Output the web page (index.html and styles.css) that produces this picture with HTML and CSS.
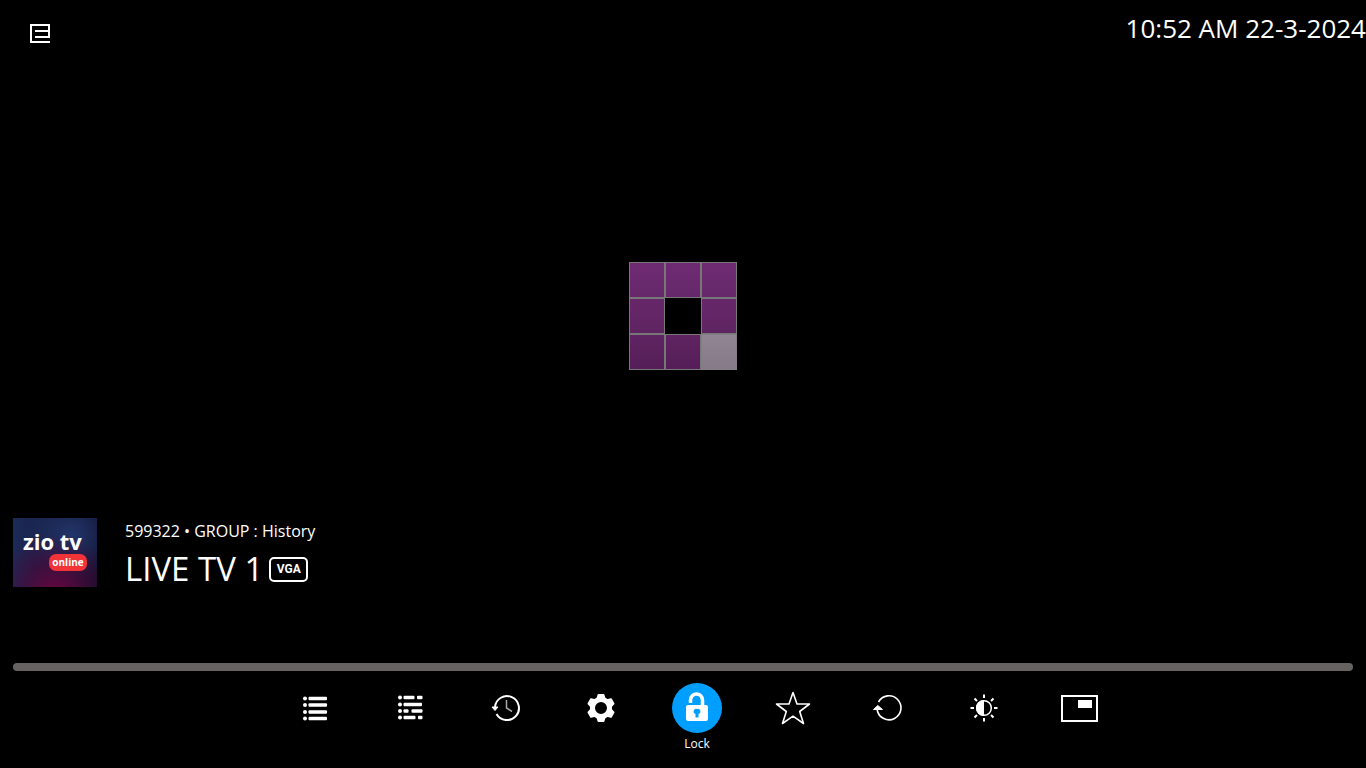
FILE: index.html
```
<!DOCTYPE html>
<html lang="en">
<head>
    <meta charset="UTF-8">
    <meta name="viewport" content="width=device-width, initial-scale=1.0">
    <title>Live TV Player</title>
    <link rel="stylesheet" href="styles.css">
</head>
<body>
    <!-- Top bar -->
    <header>
        <button class="menu-btn" aria-label="Menu">
            <svg width="21" height="20" viewBox="0 0 21 20" fill="none" stroke="#fff" stroke-width="2">
                <path d="M21 19H2V2H20V14H6M20 8H6"/>
            </svg>
        </button>
        <time class="clock" datetime="2024-03-22T10:52">10:52 AM 22-3-2024</time>
    </header>

    <!-- Loading indicator -->
    <main>
        <div class="loader" role="status" aria-label="Loading">
            <span class="cell"></span>
            <span class="cell"></span>
            <span class="cell"></span>
            <span class="cell mid"></span>
            <span class="cell empty"></span>
            <span class="cell mid"></span>
            <span class="cell low"></span>
            <span class="cell low"></span>
            <span class="cell active"></span>
        </div>
    </main>

    <!-- Channel info -->
    <section class="channel">
        <div class="logo">
            <span class="logo-name">zio tv</span>
            <span class="logo-tag">online</span>
        </div>
        <div class="info">
            <p class="group">599322 • GROUP : History</p>
            <h1>LIVE TV 1 <span class="quality">VGA</span></h1>
        </div>
    </section>

    <input class="seek" type="range" min="0" max="100" value="0" aria-label="Seek">

    <!-- Player controls -->
    <nav class="controls">
        <button class="control" aria-label="Channels">
            <svg class="icon" viewBox="0 0 50 50" fill="#fff">
                <circle cx="15" cy="15.500" r="2"/><circle cx="15" cy="22" r="2"/><circle cx="15" cy="29" r="2"/><circle cx="15" cy="35.500" r="2"/>
                <rect x="18.500" y="13.800" width="18.500" height="3.400" rx="1"/><rect x="18.500" y="20.300" width="18.500" height="3.400" rx="1"/>
                <rect x="18.500" y="27.300" width="18.500" height="3.400" rx="1"/><rect x="18.500" y="33.800" width="18.500" height="3.400" rx="1"/>
            </svg>
        </button>
        <button class="control" aria-label="Guide">
            <svg class="icon" viewBox="0 0 50 50" fill="#fff">
                <circle cx="15" cy="14.500" r="2"/><circle cx="15" cy="21.500" r="2"/><circle cx="15" cy="28" r="2"/><circle cx="15" cy="34.500" r="2"/>
                <rect x="18.500" y="12.800" width="11" height="3.400" rx="1"/><rect x="32" y="12.800" width="5.500" height="3.400" rx="1"/>
                <rect x="18.500" y="19.800" width="18.500" height="3.400" rx="1"/>
                <rect x="18.500" y="26.300" width="5" height="3.400" rx="1"/><rect x="26.500" y="26.300" width="11" height="3.400" rx="1"/>
                <rect x="18.500" y="32.800" width="12" height="3.400" rx="1"/><rect x="33" y="32.800" width="4.500" height="3.400" rx="1"/>
            </svg>
        </button>
        <button class="control" aria-label="History">
            <svg class="icon" viewBox="0 0 50 50" fill="none" stroke="#fff" stroke-width="2">
                <path d="M14 24A12 12 0 1 1 15.500 31"/>
                <path d="M11 24H17L14 27.500Z" fill="#fff" stroke-width="1"/>
                <path d="M25.500 17V25L31 28.500" stroke="#aaa" stroke-width="1.500"/>
            </svg>
        </button>
        <button class="control" aria-label="Settings">
            <svg class="icon" viewBox="0 0 50 50" fill="none" stroke="#fff">
                <circle cx="25" cy="25" r="8.500" stroke-width="5"/>
                <g fill="#fff" stroke-width="2" stroke-linejoin="round">
                    <path id="tooth" d="M22.500 12H27.500L29 17H21Z"/>
                    <use href="#tooth" transform="rotate(60 25 25)"/>
                    <use href="#tooth" transform="rotate(120 25 25)"/>
                    <use href="#tooth" transform="rotate(180 25 25)"/>
                    <use href="#tooth" transform="rotate(240 25 25)"/>
                    <use href="#tooth" transform="rotate(300 25 25)"/>
                </g>
            </svg>
        </button>
        <button class="control selected">
            <svg class="icon" viewBox="0 0 50 50" fill="none">
                <path d="M18.500 20V17A6 6 0 0 1 30.500 17V23" stroke="#fff" stroke-width="3.500"/>
                <rect x="14" y="22" width="22" height="16" rx="2" fill="#fff"/>
                <path d="M25 26A2.600 2.600 0 0 1 26.500 31V34.500H23.500V31A2.600 2.600 0 0 1 25 26Z" fill="#009fff"/>
            </svg>
            Lock
        </button>
        <button class="control" aria-label="Favorite">
            <svg class="icon" viewBox="0 0 50 50" fill="none" stroke="#fff" stroke-width="1.600" stroke-linejoin="round">
                <path d="M25 9.500L29 21H41.500L31.700 28.500L35.500 40.500L25 33.200L14.500 40.500L18.300 28.500L8.500 21H21Z"/>
            </svg>
        </button>
        <button class="control" aria-label="Reload">
            <svg class="icon" viewBox="0 0 50 50" fill="none" stroke="#fff" stroke-width="1.600">
                <path d="M15.500 19A12 12 0 1 1 14.200 27"/>
                <path d="M10.500 26.500L14.800 22.500L19.500 26.500Z" fill="#fff" stroke-width="1"/>
            </svg>
        </button>
        <button class="control" aria-label="Brightness">
            <svg class="icon" viewBox="0 0 50 50" fill="none" stroke="#fff" stroke-width="2">
                <circle cx="25" cy="25" r="7.300" stroke-width="1.500"/>
                <path d="M25 17A8 8 0 0 0 25 33Z" fill="#fff" stroke="none"/>
                <path d="M25 11.500V15M25 35V38.500M11.500 25H15M35 25H38.500M15.500 15.500L18 18M32 32L34.500 34.500M34.500 15.500L32 18M18 32L15.500 34.500"/>
            </svg>
        </button>
        <button class="control" aria-label="Picture in picture">
            <svg class="icon" viewBox="0 0 50 50" fill="none">
                <rect x="8" y="13" width="35" height="25" stroke="#fff" stroke-width="2"/>
                <rect x="24" y="17" width="14" height="8" fill="#fff"/>
            </svg>
        </button>
    </nav>
</body>
</html>
```

FILE: styles.css
```
* {
    box-sizing: border-box;
}

body {
    font-family: "Segoe UI", "Open Sans", "Noto Sans", sans-serif;
    margin: 0;
    min-height: 100vh;
    display: flex;
    flex-direction: column;
    background-color: #000;
    color: #fff;
}

button {
    padding: 0;
    border: none;
    background: none;
    color: inherit;
    font-family: inherit;
    cursor: pointer;
}

header {
    display: flex;
    justify-content: space-between;
    align-items: flex-start;
    padding: 10px 0 68px;
}

.menu-btn {
    margin: 13px 0 0 29px;
}

.menu-btn svg {
    display: block;
}

.clock {
    font-size: 26px;
    line-height: 36px;
}

main {
    flex: 1;
    display: flex;
    align-items: center;
    justify-content: center;
}

/* Loader squares */
.loader {
    display: grid;
    grid-template-columns: repeat(3, 36px);
    grid-auto-rows: 36px;
}

.cell {
    border: 1px solid #777;
    background: linear-gradient(#6e2b72, #67286b);
}

.cell.mid {
    background: linear-gradient(#67276a, #5e2461);
}

.cell.low {
    background: linear-gradient(#5f2462, #551e58);
}

.cell.active {
    border-color: #857d87;
    background: linear-gradient(#918494, #867a87);
}

.cell.empty {
    border: none;
    background: none;
}

/* Channel info */
.channel {
    display: flex;
    gap: 28px;
    padding: 0 13px;
    margin-bottom: 73px;
}

.logo {
    width: 84px;
    height: 69px;
    padding: 10px 10px 0;
    background: radial-gradient(circle at 50% 110%, #68063e 0, rgba(80, 5, 55, 0.6) 35%, transparent 70%),
                radial-gradient(circle at 70% 25%, #22356a 0, transparent 60%),
                linear-gradient(90deg, #1c2a57, #10102c);
    font-weight: bold;
}

.logo-name {
    display: block;
    font-size: 22px;
    line-height: 26px;
    white-space: nowrap;
}

.logo-tag {
    display: block;
    width: 38px;
    margin-left: 26px;
    border-radius: 7px;
    background-color: #f23338;
    font-size: 10px;
    line-height: 17px;
    text-align: center;
}

.group {
    margin: 0;
    font-size: 16px;
    line-height: 26px;
}

h1 {
    display: flex;
    align-items: center;
    gap: 6px;
    margin: 4px 0 0;
    font-size: 33px;
    font-weight: normal;
    line-height: 42px;
}

.quality {
    width: 39px;
    border: 2px solid #fff;
    border-radius: 5px;
    font-family: Roboto, sans-serif;
    font-size: 12px;
    font-weight: bold;
    line-height: 21px;
    text-align: center;
}

/* Seek bar */
.seek {
    appearance: none;
    height: 8px;
    margin: 0 13px 12px;
    border-radius: 4px;
    background-color: #666260;
}

.seek::-webkit-slider-thumb {
    appearance: none;
    width: 0;
    height: 0;
}

/* Controls */
.controls {
    display: flex;
    justify-content: center;
    padding-bottom: 13px;
}

.control {
    display: flex;
    flex-direction: column;
    align-items: center;
    width: 7%;
    font-size: 12px;
    line-height: 22px;
}

.control:first-child {
    margin-left: 28px;
}

.icon {
    width: 50px;
    height: 50px;
    border-radius: 50%;
}

.control.selected .icon {
    background-color: #009fff;
}
```
